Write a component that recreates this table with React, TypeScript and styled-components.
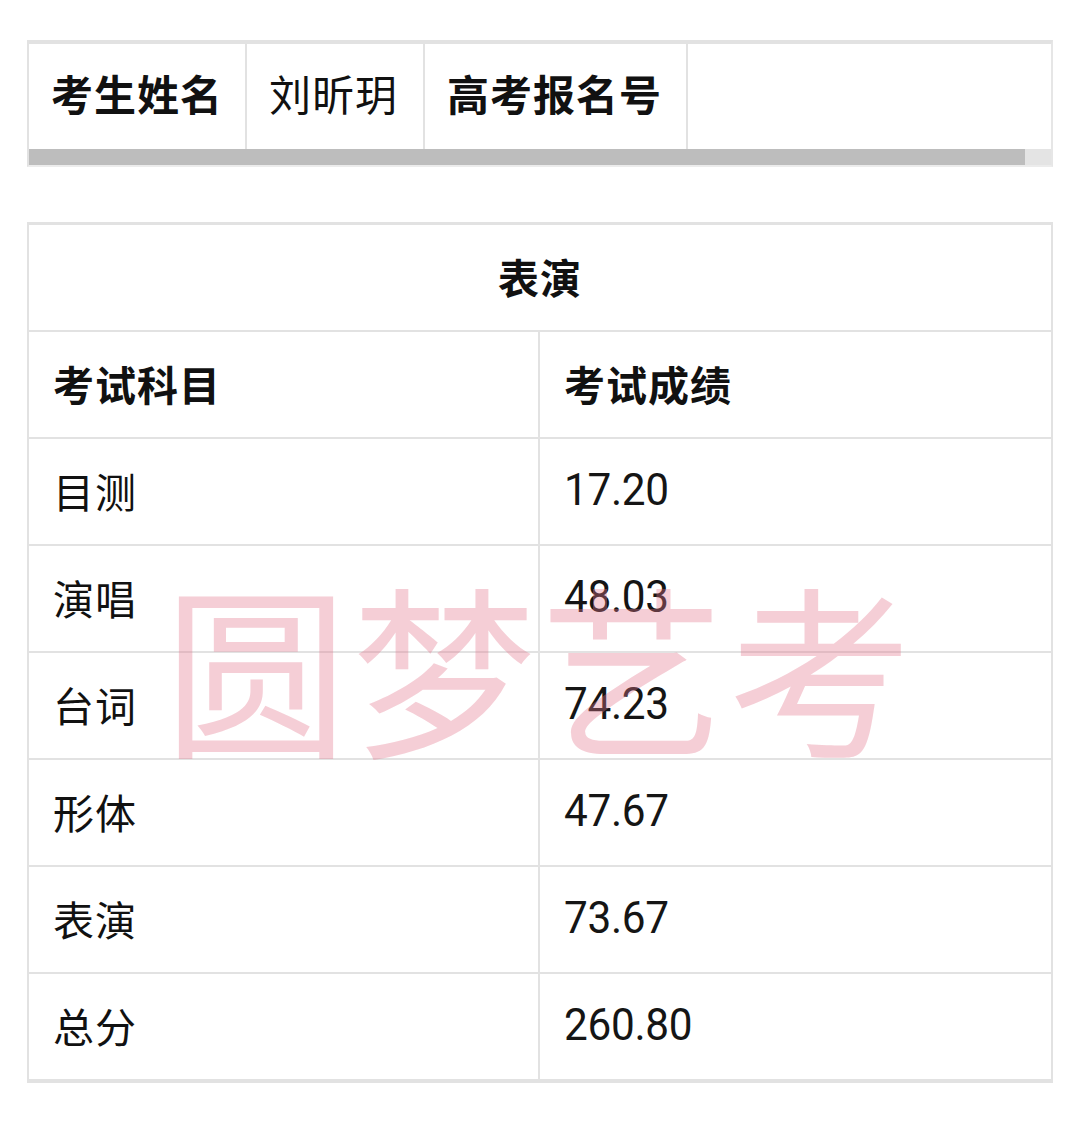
import styled, { createGlobalStyle } from 'styled-components';

const GlobalStyle = createGlobalStyle`
  html, body {
    margin: 0;
    padding: 0;
    background: #ffffff;
  }
  body {
    font-family: 'Noto Sans CJK SC', 'Noto Sans', sans-serif;
    color: #111111;
  }
`;

const Page = styled.main`
  width: 1080px;
  padding: 40px 0 53px 27px;
  box-sizing: border-box;
`;

const InfoFrame = styled.section`
  width: 1026px;
  border-top: 4px solid #e2e2e2;
  border-left: 2px solid #e2e2e2;
  border-right: 2px solid #e6e6e6;
  border-bottom: 2px solid #ececec;
  box-sizing: border-box;
`;

const InfoRow = styled.div`
  display: flex;
  height: 105px;
`;

const InfoCell = styled.div<{ $w?: number; $bold?: boolean }>`
  display: flex;
  align-items: center;
  ${(p) => (p.$w ? `width: ${p.$w}px;` : 'flex: 1;')}
  padding: 0 20px 9px 22px;
  box-sizing: border-box;
  border-right: 2px solid #e2e2e2;
  font-size: 42px;
  font-weight: ${(p) => (p.$bold ? 700 : 400)};
  letter-spacing: 1px;
  white-space: nowrap;

  &:last-child {
    border-right: none;
  }
`;

const ScrollTrack = styled.div`
  display: flex;
  height: 16px;
  background: #e4e4e4;
`;

const ScrollThumb = styled.div`
  width: 996px;
  background: #bdbdbd;
`;

const ScoreTable = styled.section`
  position: relative;
  margin-top: 55px;
  width: 1026px;
  border-top: 3px solid #e2e2e2;
  border-left: 2px solid #e2e2e2;
  border-right: 2px solid #e2e2e2;
  border-bottom: 2px solid #e2e2e2;
  box-sizing: border-box;
  overflow: hidden;
`;

const TitleRow = styled.div`
  display: flex;
  align-items: center;
  justify-content: center;
  height: 107px;
  padding-bottom: 4px;
  box-sizing: border-box;
  border-bottom: 2px solid #e2e2e2;
  font-size: 41px;
  font-weight: 700;
  letter-spacing: 1px;
`;

const Row = styled.div`
  display: grid;
  grid-template-columns: 511px 1fr;
  height: 107px;
  border-bottom: 2px solid #e2e2e2;
  box-sizing: border-box;

  &:last-child {
    border-bottom: none;
    height: 105px;
  }
`;

const Cell = styled.div<{ $bold?: boolean }>`
  display: flex;
  align-items: center;
  padding: 0 22px 4px 24px;
  border-right: 2px solid #e2e2e2;
  font-size: 41px;
  font-weight: ${(p) => (p.$bold ? 700 : 400)};
  letter-spacing: 1px;

  &:last-child {
    border-right: none;
  }
`;

const Score = styled.span`
  font-family: 'Roboto', 'Noto Sans', sans-serif;
  font-size: 45px;
  letter-spacing: -0.3px;
  transform: scaleX(0.94);
  transform-origin: left center;
  color: #151515;
`;

const Watermark = styled.div`
  position: absolute;
  top: 347px;
  left: 50%;
  transform: translateX(-50%);
  font-family: 'Noto Sans CJK SC', sans-serif;
  font-size: 184px;
  line-height: 1;
  font-weight: 400;
  letter-spacing: 4px;
  white-space: nowrap;
  color: rgba(226, 118, 142, 0.36);
  pointer-events: none;
`;

const scores = [
  { subject: '目测', score: '17.20' },
  { subject: '演唱', score: '48.03' },
  { subject: '台词', score: '74.23' },
  { subject: '形体', score: '47.67' },
  { subject: '表演', score: '73.67' },
  { subject: '总分', score: '260.80' },
];

export default function App() {
  return (
    <>
      <GlobalStyle />
      <Page>
        <InfoFrame>
          <InfoRow>
            <InfoCell $w={218} $bold>考生姓名</InfoCell>
            <InfoCell $w={178}>刘昕玥</InfoCell>
            <InfoCell $w={263} $bold>高考报名号</InfoCell>
            <InfoCell />
          </InfoRow>
          <ScrollTrack>
            <ScrollThumb />
          </ScrollTrack>
        </InfoFrame>

        <ScoreTable>
          <TitleRow>表演</TitleRow>
          <Row>
            <Cell $bold>考试科目</Cell>
            <Cell $bold>考试成绩</Cell>
          </Row>
          {scores.map((s) => (
            <Row key={s.subject}>
              <Cell>{s.subject}</Cell>
              <Cell>
                <Score>{s.score}</Score>
              </Cell>
            </Row>
          ))}
          <Watermark>圆梦艺考</Watermark>
        </ScoreTable>
      </Page>
    </>
  );
}
